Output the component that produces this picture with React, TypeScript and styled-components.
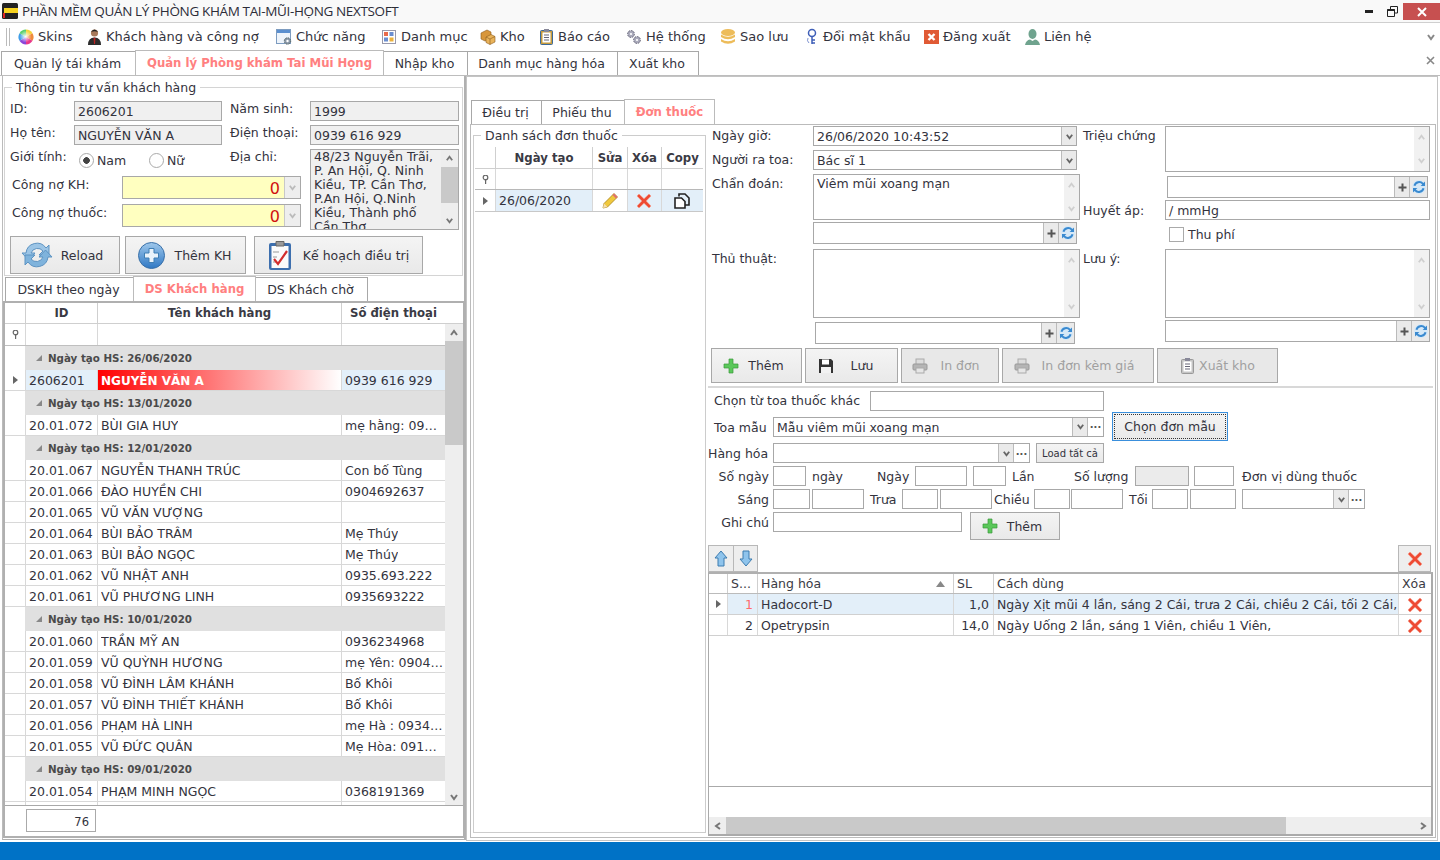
import React from "react";
import styled, { createGlobalStyle, css } from "styled-components";

const Global = createGlobalStyle`
  html, body { margin: 0; padding: 0; background: #fff; overflow: hidden; }
  * { box-sizing: border-box; }
  #root { width: 1440px; height: 860px; }
`;
const LINE = "#a8a8a8";
const FONT = `"DejaVu Sans", Verdana, sans-serif`;

const Root = styled.div`
  width: 1440px; height: 860px; display: flex; flex-direction: column;
  font: 12.5px ${FONT}; color: #33333d; background: #fff; white-space: nowrap;
`;
const TitleBar = styled.div`
  height: 23px; display: flex; align-items: center; background: #f9f9f9;
  border-bottom: 1px solid #cfcfcf; padding-left: 2px; flex: none;
`;
const TitleText = styled.div`
  margin-left: 4px; font: 13.5px "Open Sans", sans-serif; letter-spacing: -0.36px; color: #2c2c38;
`;
const WinControls = styled.div`margin-left: auto; display: flex; align-items: flex-start; height: 22px;`;
const WinBtn = styled.div<{ $w: number; $close?: boolean }>`
  width: ${(p) => p.$w}px; height: 17px; margin-top: 3px; display: flex; align-items: center; justify-content: center;
  background: ${(p) => (p.$close ? "#c75050" : "transparent")};
`;
const MenuBar = styled.div`height: 27px; display: flex; align-items: center; background: #fff; font-size: 13px; flex: none;`;
const Grip = styled.div`width: 4px; height: 18px; margin-left: 6px; margin-right: 8px; border-left: 1px solid #bbb; border-right: 1px solid #bbb;`;
const MenuItem = styled.div<{ $w: number }>`width: ${(p) => p.$w}px; display: flex; align-items: center; gap: 4px; flex: none;`;
const MenuEnd = styled.div`margin-left: auto; padding-right: 4px; display: flex;`;

const TabStrip = styled.div<{ $h: number; $pl?: number }>`
  height: ${(p) => p.$h}px; display: flex; align-items: flex-end; padding-left: ${(p) => p.$pl ?? 0}px;
  position: relative; flex: none;
`;
const Tab = styled.div<{ $w: number; $active?: boolean }>`
  width: ${(p) => p.$w}px; flex: none; display: flex; align-items: center; justify-content: center;
  border: 1px solid ${LINE}; border-bottom: none; background: #fff; margin-right: -1px; padding-right: 2px;
  height: ${(p) => (p.$active ? "100%" : "calc(100% - 1px)")};
  ${(p) => p.$active && css`color: #ff8080; font-weight: 700; font-size: 11.7px; border-color: #bbb; padding-right: 0; position: relative; z-index: 1;`}
`;
const CloseTab = styled.div`position: absolute; right: 5px; top: 6px; display: flex;`;

const Workspace = styled.div`height: 767px; display: flex; flex: none; border-top: 1px solid #bdbdbd;`;
const LeftPanel = styled.div`
  width: 464px; margin-left: 2px; height: 764px; border-right: 2px solid #b0b0b0; border-bottom: 1px solid #b0b0b0;
  border-left: 1px solid #bbb; display: flex; flex-direction: column; flex: none;
`;
const Group = styled.fieldset`
  margin: 4px 0 0 1px; padding: 0 0 0 5px; height: 196px; width: 459px; flex: none;
  border: 1px solid #d4d4d4;
`;
const Legend = styled.legend`padding: 0 4px; margin-left: 2px; line-height: 15px;`;
const InfoRow = styled.div<{ $mt: number }>`
  display: grid; grid-template-columns: 64px 148px 8px 80px 149px; margin-top: ${(p) => p.$mt}px; height: 20px;
`;
const Lbl = styled.div<{ $pl?: number; $pt?: number; $right?: boolean; $w?: number; $ml?: number }>`
  padding-left: ${(p) => p.$pl ?? 0}px; padding-top: ${(p) => p.$pt ?? 0}px; line-height: 16px; flex: none;
  ${(p) => p.$w !== undefined && css`width: ${p.$w}px;`}
  ${(p) => p.$ml !== undefined && css`margin-left: ${p.$ml}px;`}
  ${(p) => p.$right && css`text-align: right; padding-right: 4px;`}
`;
const Box = styled.div<{ $w?: number; $h?: number; $ml?: number; $ro?: boolean; $dim?: boolean }>`
  border: 1px solid ${LINE}; background: ${(p) => (p.$ro ? "#f0f0f0" : p.$dim ? "#ebebeb" : "#fff")};
  padding-left: 3px; line-height: 20px; display: flex; align-items: stretch; flex: none; overflow: hidden;
  ${(p) => p.$w !== undefined && css`width: ${p.$w}px;`}
  height: ${(p) => p.$h ?? 20}px;
  ${(p) => p.$ml !== undefined && css`margin-left: ${p.$ml}px;`}
`;
const BoxText = styled.div`flex: 1; overflow: hidden;`;
const AreaText = styled(BoxText)`line-height: 17px;`;
const AddrRow = styled.div`display: flex; margin-top: 4px; height: 81px;`;
const AddrLeft = styled.div`width: 300px; flex: none; display: flex; flex-direction: column;`;
const GenderRow = styled.div`height: 27px; display: flex; align-items: flex-start;`;
const Radio = styled.div<{ $w: number; $on?: boolean }>`
  width: ${(p) => p.$w}px; display: flex; align-items: center; gap: 3px; padding-top: 4px; flex: none; line-height: 15px;
  &::before {
    content: ""; width: 13px; height: 13px; border-radius: 50%; border: 1px solid #aaa; background: #fff;
    ${(p) => p.$on && css`background: radial-gradient(circle, #444 0 3px, #fff 3.6px);`}
  }
`;
const DebtRow = styled.div<{ $mt?: number }>`display: flex; margin-top: ${(p) => p.$mt ?? 0}px; height: 23px; padding-left: 2px;`;
const DebtInput = styled.div`
  width: 179px; flex: none; border: 1px solid ${LINE}; display: flex; background: #ffffc0; color: #d01010; font-size: 16px; line-height: 24px;
`;
const DebtVal = styled.div`flex: 1; text-align: right; padding-right: 4px;`;
const SpinCell = styled.div`
  width: 16px; flex: none; background: #eee; display: flex; align-items: center; justify-content: center;
  border-left: 1px solid #c8c8c8;
`;
const Address = styled.div`
  width: 149px; height: 81px; border: 1px solid ${LINE}; background: #f0f0f0; display: flex; overflow: hidden; flex: none;
`;
const AddressText = styled.div`flex: 1; padding-left: 3px; line-height: 14px; white-space: pre; overflow: hidden; font-size: 12.6px;`;
const VScroll = styled.div<{ $w: number }>`width: ${(p) => p.$w}px; flex: none; background: #eee; display: flex; flex-direction: column; align-items: stretch;`;
const ScrollBtn = styled.div<{ $h: number }>`height: ${(p) => p.$h}px; flex: none; display: flex; align-items: center; justify-content: center;`;
const Thumb = styled.div<{ $h?: number }>`background: #c9c9c9; ${(p) => p.$h && css`height: ${p.$h}px;`} flex: none;`;
const Fill = styled.div`flex: 1;`;
const ActionRow = styled.div<{ $mt: number; $gap?: number; $pl?: number }>`
  display: flex; gap: ${(p) => p.$gap ?? 5}px; margin-top: ${(p) => p.$mt}px; padding-left: ${(p) => p.$pl ?? 0}px; flex: none;
`;
const Btn = styled.div<{ $w: number; $h: number; $off?: boolean; $gap?: number; $ml?: number; $focus?: boolean; $pr?: number }>`
  width: ${(p) => p.$w}px; height: ${(p) => p.$h}px; flex: none; display: flex; align-items: center; justify-content: center;
  gap: ${(p) => p.$gap ?? 10}px; border: 1px solid ${LINE}; background: linear-gradient(#f4f4f4, #e9e9e9);
  padding-right: ${(p) => p.$pr ?? 0}px;
  color: ${(p) => (p.$off ? "#a0a0a0" : "inherit")};
  ${(p) => p.$off && css`background: #e8e8e8;`}
  ${(p) => p.$ml !== undefined && css`margin-left: ${p.$ml}px;`}
  ${(p) => p.$focus && css`border: 1px solid #3a8fdc; outline: 1px dotted #333; outline-offset: -3px;`}
`;
const SmallBtnText = styled.span`font-size: 10px;`;

const ListFrame = styled.div`
  flex: 1; border: 2px solid #b0b0b0; border-right-width: 1px; margin-bottom: 1px; display: flex; flex-direction: column; width: 461px; min-height: 0;
`;
const GridRow = styled.div<{ $cols: string; $h: number; $bg?: string; $line?: string }>`
  display: grid; grid-template-columns: ${(p) => p.$cols}; height: ${(p) => p.$h}px; flex: none;
  ${(p) => p.$bg && css`background: ${p.$bg};`}
  ${(p) => p.$line && css`border-bottom: 1px solid ${p.$line};`}
`;
const HeadCell = styled.div<{ $left?: boolean }>`
  font-weight: 700; font-size: 11.7px; display: flex; align-items: center; color: #3a3a44; overflow: hidden;
  justify-content: ${(p) => (p.$left ? "flex-start" : "center")};
  border-left: 1px solid #cfcfcf; ${(p) => p.$left && css`padding-left: 3px; font-weight: 400; font-size: 12.5px;`}
`;
const IndCell = styled.div`display: flex; align-items: center; justify-content: center;`;
const Cell = styled.div<{ $sel?: boolean; $right?: boolean; $hot?: boolean; $center?: boolean; $pr?: number }>`
  display: flex; align-items: center; padding: 1px ${(p) => p.$pr ?? 4}px 0 3px; overflow: hidden; border-left: 1px solid #d8d8d8; line-height: 20px;
  ${(p) => p.$sel && css`background: #e3eff9;`}
  ${(p) => p.$right && css`justify-content: flex-end;`}
  ${(p) => p.$center && css`justify-content: center;`}
  ${(p) => p.$hot && css`background: linear-gradient(90deg, #ff0000, #ffffff); color: #fff; font-weight: 700; font-size: 12px;`}
`;
const Clip = styled.span`overflow: hidden; text-overflow: ellipsis;`;
const RedNumber = styled.span`color: #ff6b6b;`;
const ListBody = styled.div`flex: 1; display: flex; min-height: 0; border-bottom: 1px solid #a8a8a8; overflow: hidden;`;
const ListMain = styled.div`width: 440px; flex: none; overflow: hidden;`;
const GroupRow = styled.div`
  height: 24px; margin-left: 20px; background: #e0e0e0; display: flex; align-items: center; gap: 5px; padding-left: 10px;
  font-weight: 700; font-size: 10.3px; color: #4a4a4a;
`;
const ListFooter = styled.div`height: 30px; flex: none; padding: 3px 0 0 21px; background: #fff;`;
const CountBox = styled.div`width: 70px; height: 23px; border: 1px solid #aaa; text-align: right; padding-right: 6px; font-size: 11.5px; line-height: 24px;`;

const RightPanel = styled.div`
  width: 972px; height: 765px; border: 1px solid #c4c4c4; padding: 22px 1px 2px 3px; display: flex; flex-direction: column; flex: none;
`;
const TabPanel = styled.div`flex: 1; border: 1px solid #bbb; display: flex; padding: 0 2px 1px 2px; min-height: 0; width: 966px;`;
const DrugGroup = styled.fieldset`
  margin: 3px 0 3px 0; padding: 0 0 0 1px; width: 233px; flex: none; border: 1px solid #ccc; min-height: 0;
`;
const DrugLegend = styled.legend`padding: 0 4px; margin-left: 6px; line-height: 15px;`;
const DrugList = styled.div`width: 228px; margin-top: 4px;`;
const Detail = styled.div`margin-left: 2px; width: 725px; display: flex; flex-direction: column; flex: none;`;
const TopForm = styled.div`display: flex; height: 263px; border-bottom: 2px solid #d8d8d8; flex: none; flex-wrap: wrap; align-content: flex-start; padding-top: 1px;`;
const FormCol = styled.div<{ $w: number }>`width: ${(p) => p.$w}px; flex: none; display: flex; flex-direction: column;`;
const FormRow = styled.div<{ $mt?: number; $lw: number; $pl?: number }>`
  display: grid; grid-template-columns: ${(p) => p.$lw}px 1fr; margin-top: ${(p) => p.$mt ?? 0}px; padding-left: ${(p) => p.$pl ?? 0}px; flex: none;
`;
const ComboBtn = styled.div<{ $w?: number }>`
  width: ${(p) => p.$w ?? 15}px; flex: none; background: #eaeaea; border-left: 1px solid #bbb; display: flex; align-items: center; justify-content: center;
`;
const Ellipsis = styled(ComboBtn)`background: #fff; font-size: 10px; line-height: 1; font-weight: 700; padding-bottom: 3px; color: #555;`;
const PaleScroll = styled.div`width: 15px; flex: none; background: #f1f1f1; display: flex; flex-direction: column; justify-content: space-between; align-items: center; padding: 6px 0;`;
const CheckRow = styled.div`margin: 8px 0 0 89px; display: flex; align-items: center; gap: 4px; height: 13px; line-height: 15px;
  &::before { content: ""; width: 13px; height: 13px; border: 1px solid #aaa; background: #fff; }`;
const FlexRow = styled.div<{ $mt: number; $h?: number; $center?: boolean }>`
  display: flex; margin-top: ${(p) => p.$mt}px; flex: none; height: ${(p) => (p.$h ? `${p.$h}px` : "auto")};
  align-items: ${(p) => (p.$center ? "center" : "flex-start")};
`;
const TextLine = styled(Lbl)`line-height: 22px;`;
const Toolbar = styled.div`height: 27px; margin-top: 5px; flex: none; display: flex; width: 723px;`;
const ToolBtn = styled.div<{ $w: number; $push?: boolean }>`
  width: ${(p) => p.$w}px; flex: none; background: #eee; border: 1px solid #b8b8b8; margin-right: -1px; display: flex; align-items: center; justify-content: center;
  ${(p) => p.$push && css`margin-left: auto; margin-right: 0;`}
`;
const DrugTable = styled.div`flex: 1; width: 725px; border-top: 2px solid #b0b0b0; border-right: 2px solid #aaa; border-left: 1px solid #aaa; border-bottom: 2px solid #aaa; display: flex; flex-direction: column; min-height: 0;`;
const TableBody = styled.div`flex: 1;`;
const TableFoot = styled.div`height: 31px; flex: none; border-top: 1px solid #aaa;`;
const HScroll = styled.div`height: 17px; flex: none; background: #eee; display: flex;`;
const HArrow = styled.div`width: 17px; flex: none; display: flex; align-items: center; justify-content: center;`;
const HThumb = styled.div`width: 560px; background: #c9c9c9; flex: none;`;
const StatusBar = styled.div`height: 18px; background: #0072c6; flex: none;`;
const Svg = styled.svg`flex: none; display: block;`;

const Chevron = ({ dir = "down", c = "#777", s = 10 }: { dir?: string; c?: string; s?: number }) => {
  const d: Record<string, string> = { down: "2,3 5,7 8,3", up: "2,7 5,3 8,7", left: "7,2 3,5 7,8", right: "3,2 7,5 3,8" };
  return <Svg width={s} height={s} viewBox="0 0 10 10"><polyline points={d[dir]} fill="none" stroke={c} strokeWidth="2" /></Svg>;
};
const Logo = () => (
  <Svg width="16" height="18" viewBox="0 0 16 18">
    <rect x="0" y="1" width="16" height="16" rx="1.5" fill="#222" />
    <rect x="2" y="6" width="14" height="5" fill="#f6d21f" />
    <rect x="1" y="11" width="2" height="5" fill="#d22" />
  </Svg>
);
const SkinsIcon = () => (
  <Svg width="16" height="18" viewBox="0 0 16 18">
    <defs><radialGradient id="wh"><stop offset="0" stopColor="#fff" stopOpacity=".95" /><stop offset="1" stopColor="#fff" stopOpacity="0" /></radialGradient></defs>
    <path d="M8 9 L8 1.5 A7.5 7.5 0 0 1 14.5 5.2Z" fill="#f3d43b" />
    <path d="M8 9 L14.5 5.2 A7.5 7.5 0 0 1 14.5 12.8Z" fill="#f08a3c" />
    <path d="M8 9 L14.5 12.8 A7.5 7.5 0 0 1 8 16.5Z" fill="#e8388a" />
    <path d="M8 9 L8 16.5 A7.5 7.5 0 0 1 1.5 12.8Z" fill="#8a45d8" />
    <path d="M8 9 L1.5 12.8 A7.5 7.5 0 0 1 1.5 5.2Z" fill="#3f9de8" />
    <path d="M8 9 L1.5 5.2 A7.5 7.5 0 0 1 8 1.5Z" fill="#57cf6b" />
    <circle cx="7.5" cy="8.5" r="6" fill="url(#wh)" />
  </Svg>
);
const PersonIcon = () => (
  <Svg width="15" height="18" viewBox="0 0 15 18">
    <circle cx="7.5" cy="5" r="3.6" fill="#a8795a" />
    <path d="M4 4 Q7.5 -1 11 4 Q7.5 2.5 4 4Z" fill="#222" />
    <path d="M1 17 Q1 9.5 7.5 9.5 Q14 9.5 14 17Z" fill="#2c2c2c" />
    <path d="M6.5 9.8 L8.5 9.8 L8 16 L7 16Z" fill="#b22" />
  </Svg>
);
const WindowGear = () => (
  <Svg width="16" height="18" viewBox="0 0 16 18">
    <rect x=".5" y="1.5" width="14" height="14" fill="#eef4fb" stroke="#7d9cc0" />
    <rect x="1" y="2" width="13" height="3" fill="#5b8fcf" />
    <circle cx="11.5" cy="13" r="3.2" fill="#8a98a8" stroke="#566" strokeDasharray="1.5 1" />
    <circle cx="11.5" cy="13" r="1.2" fill="#fff" />
  </Svg>
);
const CatIcon = () => (
  <Svg width="16" height="18" viewBox="0 0 16 18">
    <rect x="1.5" y="2.5" width="13" height="13" fill="#fff" stroke="#99a" />
    <rect x="3" y="4" width="4" height="4" fill="#e96a4a" /><rect x="8.5" y="4" width="4" height="4" fill="#6a8ed0" />
    <rect x="3" y="9.5" width="4" height="4" fill="#6a8ed0" /><rect x="8.5" y="9.5" width="4" height="4" fill="#ecb13c" />
  </Svg>
);
const BoxIcon = () => (
  <Svg width="16" height="18" viewBox="0 0 16 18">
    <path d="M1 5 L7 2 L11 4 L11 10 L5 13 L1 11Z" fill="#d8963a" stroke="#8c5a1c" strokeWidth=".6" />
    <path d="M6 9 L11 6.5 L15 8.5 L15 14 L10 16.5 L6 14.5Z" fill="#e9b35a" stroke="#8c5a1c" strokeWidth=".6" />
    <path d="M6 9 L10 11 L15 8.5 M10 11 L10 16.5" stroke="#8c5a1c" strokeWidth=".6" fill="none" />
  </Svg>
);
const ClipIcon = ({ c = "#c59a3c", b = "#3c6a9a" }: { c?: string; b?: string }) => (
  <Svg width="15" height="18" viewBox="0 0 15 18">
    <rect x="1.5" y="2.5" width="12" height="14" rx="1" fill={c} stroke={b} />
    <rect x="3.5" y="4.5" width="8" height="10" fill="#fff" />
    <rect x="5" y="1" width="5" height="3" fill="#889" />
    <path d="M5 7h5M5 9.5h5M5 12h5" stroke="#667" />
  </Svg>
);
const GearsIcon = () => (
  <Svg width="16" height="18" viewBox="0 0 16 18">
    <circle cx="5" cy="6" r="3.4" fill="#aab" stroke="#667" strokeDasharray="1.6 1" />
    <circle cx="5" cy="6" r="1.1" fill="#fff" />
    <circle cx="11" cy="12" r="3.4" fill="#aab" stroke="#667" strokeDasharray="1.6 1" />
    <circle cx="11" cy="12" r="1.1" fill="#fff" />
  </Svg>
);
const DbIcon = () => (
  <Svg width="16" height="18" viewBox="0 0 16 18">
    <ellipse cx="8" cy="4.5" rx="7" ry="3.5" fill="#edbc5a" />
    <path d="M1 6.5 Q8 11 15 6.5 V9 Q8 13.5 1 9Z" fill="#edbc5a" />
    <path d="M1 11 Q8 15.5 15 11 V13.5 Q8 18 1 13.5Z" fill="#edbc5a" />
  </Svg>
);
const KeyIcon = () => (
  <Svg width="14" height="18" viewBox="0 0 14 18">
    <circle cx="7" cy="5" r="3.5" fill="none" stroke="#3f5fb8" strokeWidth="1.5" />
    <path d="M7 8.5 V16 M7 12 H10 M7 15 H10" stroke="#3f5fb8" strokeWidth="1.5" />
    <path d="M3 10 Q1.5 13 4 15" fill="none" stroke="#7d92d0" />
  </Svg>
);
const ExitIcon = () => (
  <Svg width="15" height="18" viewBox="0 0 15 18">
    <rect x="0" y="2" width="15" height="14" fill="#e05a35" />
    <path d="M4.5 6 L10.5 12 M10.5 6 L4.5 12" stroke="#fff" strokeWidth="2.4" />
  </Svg>
);
const ContactIcon = () => (
  <Svg width="15" height="18" viewBox="0 0 15 18">
    <ellipse cx="7.5" cy="6" rx="4" ry="5" fill="#6fa38e" />
    <path d="M0 17 Q1 12 5 11.5 L7.5 13 L10 11.5 Q14 12 15 17Z" fill="#6fa38e" />
  </Svg>
);
const XIcon = ({ s = 16 }: { s?: number }) => (
  <Svg width={s} height={s} viewBox="0 0 16 16">
    <path d="M3 1 L8 5.8 L13 1 L15 3 L10.2 8 L15 13 L13 15 L8 10.2 L3 15 L1 13 L5.8 8 L1 3Z" fill="#ee4a33" stroke="#f49a8a" strokeWidth=".8" />
  </Svg>
);
const PlusSmall = () => <Svg width="9" height="9" viewBox="0 0 9 9"><path d="M4.5 0.5V8.5M0.5 4.5H8.5" stroke="#555" strokeWidth="2" /></Svg>;
const RefreshMini = () => (
  <Svg width="16" height="16" viewBox="0 0 16 16">
    <circle cx="8" cy="8" r="7" fill="#d5e8f7" />
    <path d="M2.5 6.5 A5.8 5.8 0 0 1 12.5 4 L14 2.5 V7 H9.6 L11.2 5.4 A4 4 0 0 0 4.4 7Z" fill="#3a8ad0" />
    <path d="M13.5 9.5 A5.8 5.8 0 0 1 3.5 12 L2 13.5 V9 H6.4 L4.8 10.6 A4 4 0 0 0 11.6 9Z" fill="#3a8ad0" />
  </Svg>
);
const ReloadBig = () => (
  <Svg width="32" height="28" viewBox="0 0 32 28">
    <path d="M5 12 A11 11 0 0 1 25 7 L28 4 L28 14 L18 14 L22 10 A7 7 0 0 0 10 12 L14 12 L7.5 19 L1 12Z" fill="#9cc5e6" stroke="#5d93c2" />
    <path d="M27 16 A11 11 0 0 1 7 21 L4 24 L4 14 L14 14 L10 18 A7 7 0 0 0 22 16 L18 16 L24.5 9 L31 16Z" fill="#7fb3dc" stroke="#5d93c2" />
  </Svg>
);
const PlusCircle = () => (
  <Svg width="27" height="27" viewBox="0 0 27 27">
    <defs><linearGradient id="pc" x1="0" y1="0" x2="0" y2="1"><stop offset="0" stopColor="#9fc8ec" /><stop offset="1" stopColor="#2f78c4" /></linearGradient></defs>
    <circle cx="13.5" cy="13.5" r="13" fill="url(#pc)" stroke="#3a70a8" />
    <path d="M11 6.5H16V11H20.5V16H16V20.5H11V16H6.5V11H11Z" fill="#eaf3fb" stroke="#3f7fb5" />
  </Svg>
);
const PlanIcon = () => (
  <Svg width="24" height="32" viewBox="0 0 24 32">
    <rect x="1" y="4" width="22" height="27" rx="2" fill="#3d6fae" />
    <rect x="3.5" y="7" width="17" height="22" fill="#fbfbfb" />
    <path d="M8 2.5 H16 V7 H8Z" fill="#9a9a9a" stroke="#666" />
    <path d="M5 13h6M5 18h4M5 23h4" stroke="#bbb" strokeWidth="1.5" />
    <path d="M6 20 L10 25 L19 12" fill="none" stroke="#d22d2d" strokeWidth="2.2" />
  </Svg>
);
const Pencil = () => (
  <Svg width="18" height="18" viewBox="0 0 18 18">
    <path d="M2 16 L3 11.5 L13 1.5 L16.5 5 L6.5 15Z" fill="#f0c83c" stroke="#a88218" strokeWidth=".8" />
    <path d="M2 16 L3 11.5 L6.5 15Z" fill="#f5dfb0" />
    <path d="M13 1.5 L16.5 5 L15 6.5 L11.5 3Z" fill="#e07070" />
  </Svg>
);
const CopyIcon = () => (
  <Svg width="16" height="16" viewBox="0 0 16 16">
    <path d="M5 3.5V1H11L15 5V12H11" fill="none" stroke="#222" strokeWidth="1.6" />
    <path d="M1 5H7.5L11 8.5V15H1Z" fill="#fff" stroke="#222" strokeWidth="1.6" />
  </Svg>
);
const GreenPlus = () => (
  <Svg width="16" height="16" viewBox="0 0 16 16">
    <path d="M6 1H10V6H15V10H10V15H6V10H1V6H6Z" fill="#5bc85b" stroke="#3a9a3a" strokeWidth=".7" />
  </Svg>
);
const Floppy = () => (
  <Svg width="16" height="16" viewBox="0 0 16 16">
    <path d="M1 1H13L15 3V15H1Z" fill="#333" /><rect x="4" y="1.5" width="7" height="5" fill="#fff" />
    <rect x="3" y="9" width="10" height="6" fill="#f2f2f2" />
  </Svg>
);
const Printer = () => (
  <Svg width="16" height="16" viewBox="0 0 16 16">
    <rect x="4" y="1" width="8" height="6" fill="#ddd" stroke="#aaa" />
    <rect x="1" y="6" width="14" height="6" rx="1" fill="#b5b5b5" stroke="#999" />
    <rect x="4" y="10" width="8" height="5" fill="#e6e6e6" stroke="#aaa" />
  </Svg>
);
const Pin = () => (
  <Svg width="7" height="9" viewBox="0 0 7 9">
    <circle cx="3.5" cy="2.5" r="2.3" fill="#fff" stroke="#666" strokeWidth="1.2" /><rect x="3" y="4" width="1.2" height="5" fill="#666" />
  </Svg>
);
const RowArrow = () => <Svg width="5" height="8" viewBox="0 0 5 8"><path d="M0 0 L5 4 L0 8Z" fill="#666" /></Svg>;
const GroupMark = () => <Svg width="8" height="8" viewBox="0 0 8 8"><path d="M7 1 V7 H1Z" fill="#888" /></Svg>;
const SortUp = () => <Svg width="9" height="6" viewBox="0 0 9 6"><path d="M4.5 0 L9 6 H0Z" fill="#888" /></Svg>;
const MoveArrow = ({ up }: { up?: boolean }) => (
  <Svg width="14" height="17" viewBox="0 0 14 17">
    <path d={up ? "M7 1 L13 8 H10 V16 H4 V8 H1Z" : "M7 16 L13 9 H10 V1 H4 V9 H1Z"} fill="#8fc4ec" stroke="#3d7cb0" />
  </Svg>
);

const LEFT_COLS = "20px 72px 244px 104px";
type Item = { g: string } | { id: string; name: string; phone: string; sel?: boolean };
const people: Item[] = [
  { g: "Ngày tạo HS: 26/06/2020" },
  { id: "2606201", name: "NGUYỄN VĂN A", phone: "0939 616 929", sel: true },
  { g: "Ngày tạo HS: 13/01/2020" },
  { id: "20.01.072", name: "BÙI GIA HUY", phone: "mẹ hằng: 0915468912" },
  { g: "Ngày tạo HS: 12/01/2020" },
  { id: "20.01.067", name: "NGUYỄN THANH TRÚC", phone: "Con bố Tùng" },
  { id: "20.01.066", name: "ĐÀO HUYỀN CHI", phone: "0904692637" },
  { id: "20.01.065", name: "VŨ VĂN VƯỢNG", phone: "" },
  { id: "20.01.064", name: "BÙI BẢO TRÂM", phone: "Mẹ Thúy" },
  { id: "20.01.063", name: "BÙI BẢO NGỌC", phone: "Mẹ Thúy" },
  { id: "20.01.062", name: "VŨ NHẬT ANH", phone: "0935.693.222" },
  { id: "20.01.061", name: "VŨ PHƯƠNG LINH", phone: "0935693222" },
  { g: "Ngày tạo HS: 10/01/2020" },
  { id: "20.01.060", name: "TRẦN MỸ AN", phone: "0936234968" },
  { id: "20.01.059", name: "VŨ QUỲNH HƯƠNG", phone: "mẹ Yên: 0904123456" },
  { id: "20.01.058", name: "VŨ ĐÌNH LÂM KHÁNH", phone: "Bố Khôi" },
  { id: "20.01.057", name: "VŨ ĐÌNH THIẾT KHÁNH", phone: "Bố Khôi" },
  { id: "20.01.056", name: "PHẠM HÀ LINH", phone: "mẹ Hà : 0934567812" },
  { id: "20.01.055", name: "VŨ ĐỨC QUÂN", phone: "Mẹ Hòa: 0912345678" },
  { g: "Ngày tạo HS: 09/01/2020" },
  { id: "20.01.054", name: "PHẠM MINH NGỌC", phone: "0368191369" },
  { id: "", name: "", phone: "" },
];
const menu = [
  { w: 69, icon: <SkinsIcon />, t: "Skins" },
  { w: 189, icon: <PersonIcon />, t: "Khách hàng và công nợ" },
  { w: 105, icon: <WindowGear />, t: "Chức năng" },
  { w: 99, icon: <CatIcon />, t: "Danh mục" },
  { w: 59, icon: <BoxIcon />, t: "Kho" },
  { w: 87, icon: <ClipIcon />, t: "Báo cáo" },
  { w: 94, icon: <GearsIcon />, t: "Hệ thống" },
  { w: 85, icon: <DbIcon />, t: "Sao lưu" },
  { w: 119, icon: <KeyIcon />, t: "Đổi mật khẩu" },
  { w: 101, icon: <ExitIcon />, t: "Đăng xuất" },
  { w: 80, icon: <ContactIcon />, t: "Liên hệ" },
];
const Combo = ({ w, text, dots, ml }: { w: number; text?: string; dots?: boolean; ml?: number }) => (
  <Box $w={w} $ml={ml}>
    <BoxText>{text}</BoxText>
    <ComboBtn><Chevron c="#666" s={9} /></ComboBtn>
    {dots && <Ellipsis $w={16}>...</Ellipsis>}
  </Box>
);
const AddField = ({ w, ml }: { w?: number; ml?: number }) => (
  <Box $w={w} $h={22} $ml={ml}>
    <BoxText />
    <ComboBtn><PlusSmall /></ComboBtn>
    <ComboBtn $w={18}><RefreshMini /></ComboBtn>
  </Box>
);
const Area = ({ h, text }: { h: number; text?: string }) => (
  <Box $h={h}>
    <AreaText>{text}</AreaText>
    <PaleScroll><Chevron dir="up" c="#cfcfcf" s={9} /><Chevron c="#cfcfcf" s={9} /></PaleScroll>
  </Box>
);
const drugCols = "18px 30px 196px 40px 405px 34px";
const listCols = "20px 97px 35px 34px 42px";

export default function App() {
  return (
    <Root>
      <Global />
      <TitleBar>
        <Logo />
        <TitleText>PHẦN MỀM QUẢN LÝ PHÒNG KHÁM TAI-MŨI-HỌNG NEXTSOFT</TitleText>
        <WinControls>
          <WinBtn $w={24}><Svg width="8" height="3" viewBox="0 0 8 3"><rect width="8" height="3" fill="#222" /></Svg></WinBtn>
          <WinBtn $w={22}><Svg width="11" height="11" viewBox="0 0 11 11"><path d="M3.5 3V.5H10.5V7H8M.5 3.5H7.5V10.5H.5Z" fill="none" stroke="#222" /><rect x=".5" y="3" width="7" height="2" fill="#222" /></Svg></WinBtn>
          <WinBtn $w={37} $close><Svg width="10" height="10" viewBox="0 0 10 10"><path d="M1 1 L9 9 M9 1 L1 9" stroke="#fff" strokeWidth="2" /></Svg></WinBtn>
        </WinControls>
      </TitleBar>
      <MenuBar>
        <Grip />
        {menu.map((m) => <MenuItem key={m.t} $w={m.w}>{m.icon}<span>{m.t}</span></MenuItem>)}
        <MenuEnd><Chevron c="#888" s={10} /></MenuEnd>
      </MenuBar>
      <TabStrip $h={25} $pl={1}>
        <Tab $w={135}>Quản lý tái khám</Tab>
        <Tab $w={249} $active>Quản lý Phòng khám Tai Mũi Họng</Tab>
        <Tab $w={85}>Nhập kho</Tab>
        <Tab $w={151}>Danh mục hàng hóa</Tab>
        <Tab $w={82}>Xuất kho</Tab>
        <CloseTab><Svg width="9" height="9" viewBox="0 0 9 9"><path d="M1 1 L8 8 M8 1 L1 8" stroke="#888" strokeWidth="1.6" /></Svg></CloseTab>
      </TabStrip>
      <Workspace>
        <LeftPanel>
          <Group>
            <Legend>Thông tin tư vấn khách hàng</Legend>
            <InfoRow $mt={6}>
              <Lbl>ID:</Lbl><Box $ro>2606201</Box><span /><Lbl>Năm sinh:</Lbl><Box $ro>1999</Box>
            </InfoRow>
            <InfoRow $mt={4}>
              <Lbl>Họ tên:</Lbl><Box $ro>NGUYỄN VĂN A</Box><span /><Lbl>Điện thoại:</Lbl><Box $ro>0939 616 929</Box>
            </InfoRow>
            <AddrRow>
              <AddrLeft>
                <GenderRow>
                  <Lbl $w={69}>Giới tính:</Lbl>
                  <Radio $w={70} $on>Nam</Radio>
                  <Radio $w={81}>Nữ</Radio>
                  <Lbl>Địa chỉ:</Lbl>
                </GenderRow>
                <DebtRow>
                  <Lbl $w={110} $pt={1}>Công nợ KH:</Lbl>
                  <DebtInput><DebtVal>0</DebtVal><SpinCell><Chevron c="#bbb" s={9} /></SpinCell></DebtInput>
                </DebtRow>
                <DebtRow $mt={5}>
                  <Lbl $w={110} $pt={1}>Công nợ thuốc:</Lbl>
                  <DebtInput><DebtVal>0</DebtVal><SpinCell><Chevron c="#bbb" s={9} /></SpinCell></DebtInput>
                </DebtRow>
              </AddrLeft>
              <Address>
                <AddressText>{"48/23 Nguyễn Trãi,\nP. An Hội, Q. Ninh\nKiều, TP. Cần Thơ,\nP.An Hội, Q.Ninh\nKiều, Thành phố\nCần Thơ"}</AddressText>
                <VScroll $w={17}>
                  <ScrollBtn $h={17}><Chevron dir="up" s={9} /></ScrollBtn>
                  <Thumb $h={36} /><Fill />
                  <ScrollBtn $h={17}><Chevron s={9} /></ScrollBtn>
                </VScroll>
              </Address>
            </AddrRow>
            <ActionRow $mt={6}>
              <Btn $w={110} $h={38} $gap={8} $pr={6}><ReloadBig /><span>Reload</span></Btn>
              <Btn $w={121} $h={38} $gap={10} $pr={2}><PlusCircle /><span>Thêm KH</span></Btn>
              <Btn $w={169} $h={38} $gap={11} $ml={3}><PlanIcon /><span>Kế hoạch điều trị</span></Btn>
            </ActionRow>
          </Group>
          <TabStrip $h={25} $pl={2}>
            <Tab $w={129}>DSKH theo ngày</Tab>
            <Tab $w={123} $active>DS Khách hàng</Tab>
            <Tab $w={113}>DS Khách chờ</Tab>
          </TabStrip>
          <ListFrame>
            <GridRow $cols={LEFT_COLS} $h={21} $line="#cfcfcf">
              <IndCell /><HeadCell>ID</HeadCell><HeadCell>Tên khách hàng</HeadCell><HeadCell>Số điện thoại</HeadCell>
            </GridRow>
            <ListBody>
              <ListMain>
                <GridRow $cols={LEFT_COLS} $h={22} $line="#bfbfbf">
                  <IndCell><Pin /></IndCell><Cell /><Cell /><Cell />
                </GridRow>
                {people.map((p, i) =>
                  "g" in p ? (
                    <GroupRow key={i}><GroupMark />{p.g}</GroupRow>
                  ) : (
                    <GridRow key={i} $cols={LEFT_COLS} $h={21} $line="#d8d8d8">
                      <IndCell>{p.sel && <RowArrow />}</IndCell>
                      <Cell $sel={p.sel}>{p.id}</Cell>
                      <Cell $hot={p.sel}><Clip>{p.name}</Clip></Cell>
                      <Cell $sel={p.sel} $pr={2}><Clip>{p.phone}</Clip></Cell>
                    </GridRow>
                  )
                )}
              </ListMain>
              <VScroll $w={18}>
                <ScrollBtn $h={17}><Chevron dir="up" /></ScrollBtn>
                <Thumb $h={104} /><Fill />
                <ScrollBtn $h={17}><Chevron /></ScrollBtn>
              </VScroll>
            </ListBody>
            <ListFooter><CountBox>76</CountBox></ListFooter>
          </ListFrame>
        </LeftPanel>
        <RightPanel>
          <TabStrip $h={25} $pl={1}>
            <Tab $w={71}>Điều trị</Tab>
            <Tab $w={84}>Phiếu thu</Tab>
            <Tab $w={91} $active>Đơn thuốc</Tab>
          </TabStrip>
          <TabPanel>
            <DrugGroup>
              <DrugLegend>Danh sách đơn thuốc</DrugLegend>
              <DrugList>
                <GridRow $cols={listCols} $h={22} $line="#cfcfcf">
                  <IndCell /><HeadCell>Ngày tạo</HeadCell><HeadCell>Sửa</HeadCell><HeadCell>Xóa</HeadCell><HeadCell>Copy</HeadCell>
                </GridRow>
                <GridRow $cols={listCols} $h={21} $line="#b8b8b8">
                  <IndCell><Pin /></IndCell><Cell /><Cell /><Cell /><Cell />
                </GridRow>
                <GridRow $cols={listCols} $h={22} $line="#c8c8c8">
                  <IndCell><RowArrow /></IndCell>
                  <Cell $sel>26/06/2020</Cell>
                  <Cell $center><Pencil /></Cell>
                  <Cell $sel $center><XIcon /></Cell>
                  <Cell $sel $center><CopyIcon /></Cell>
                </GridRow>
              </DrugList>
            </DrugGroup>
            <Detail>
              <TopForm>
                <FormCol $w={372}>
                  <FormRow $lw={101} $pl={4}><Lbl $pt={2}>Ngày giờ:</Lbl><Combo w={264} text="26/06/2020 10:43:52" /></FormRow>
                  <FormRow $lw={101} $pl={4} $mt={4}><Lbl $pt={2}>Người ra toa:</Lbl><Combo w={264} text="Bác sĩ 1" /></FormRow>
                  <FormRow $lw={101} $pl={4} $mt={4}><Lbl $pt={2}>Chẩn đoán:</Lbl><Area h={46} text="Viêm mũi xoang mạn" /></FormRow>
                  <FormRow $lw={101} $pl={4} $mt={2}><span /><AddField w={264} /></FormRow>
                  <FormRow $lw={101} $pl={4} $mt={5}><Lbl $pt={2}>Thủ thuật:</Lbl><Area h={69} /></FormRow>
                  <FormRow $lw={103} $pl={4} $mt={4}><span /><AddField w={260} /></FormRow>
                </FormCol>
                <FormCol $w={350}>
                  <FormRow $lw={82} $pl={3}><Lbl $pt={2}>Triệu chứng</Lbl><Area h={46} /></FormRow>
                  <FormRow $lw={84} $pl={3} $mt={4}><span /><AddField w={261} /></FormRow>
                  <FormRow $lw={82} $pl={3} $mt={2}><Lbl $pt={3}>Huyết áp:</Lbl><Box>/ mmHg</Box></FormRow>
                  <CheckRow>Thu phí</CheckRow>
                  <FormRow $lw={82} $pl={3} $mt={8}><Lbl $pt={2}>Lưu ý:</Lbl><Area h={69} /></FormRow>
                  <FormRow $lw={82} $pl={3} $mt={2}><span /><AddField /></FormRow>
                </FormCol>
                <ActionRow $mt={4} $gap={3} $pl={3}>
                  <Btn $w={91} $h={35} $gap={9} $pr={6}><GreenPlus /><span>Thêm</span></Btn>
                  <Btn $w={93} $h={35} $gap={17} $pr={12}><Floppy /><span>Lưu</span></Btn>
                  <Btn $w={98} $h={35} $off $gap={12} $pr={8}><Printer /><span>In đơn</span></Btn>
                  <Btn $w={152} $h={35} $off $gap={12} $pr={8}><Printer /><span>In đơn kèm giá</span></Btn>
                  <Btn $w={121} $h={35} $off $gap={4}><ClipIcon c="#c4c4c4" b="#999" /><span>Xuất kho</span></Btn>
                </ActionRow>
              </TopForm>
              <FlexRow $mt={3} $center>
                <Lbl $w={162} $pl={6}>Chọn từ toa thuốc khác</Lbl>
                <Box $w={234} />
              </FlexRow>
              <FlexRow $mt={1} $h={29} $center>
                <Lbl $w={65} $pl={6} $pt={2}>Toa mẫu</Lbl>
                <Combo w={331} text="Mẫu viêm mũi xoang mạn" dots />
                <Btn $w={116} $h={29} $ml={8} $focus>Chọn đơn mẫu</Btn>
              </FlexRow>
              <FlexRow $mt={2} $h={20}>
                <TextLine $w={65}>Hàng hóa</TextLine>
                <Combo w={257} dots />
                <Btn $w={68} $h={20} $ml={6}><SmallBtnText>Load tất cả</SmallBtnText></Btn>
              </FlexRow>
              <FlexRow $mt={3} $h={20}>
                <TextLine $w={65} $right>Số ngày</TextLine>
                <Box $w={33} />
                <TextLine $w={71} $pl={6}>ngày</TextLine>
                <TextLine $w={38}>Ngày</TextLine>
                <Box $w={52} />
                <Box $w={33} $ml={6} />
                <TextLine $w={68} $pl={6}>Lần</TextLine>
                <TextLine $w={61}>Số lượng</TextLine>
                <Box $w={54} $dim />
                <Box $w={40} $ml={5} />
                <TextLine $pl={8}>Đơn vị dùng thuốc</TextLine>
              </FlexRow>
              <FlexRow $mt={3} $h={20}>
                <TextLine $w={65} $right>Sáng</TextLine>
                <Box $w={37} />
                <Box $w={52} $ml={2} />
                <TextLine $w={38} $pl={6}>Trưa</TextLine>
                <Box $w={36} />
                <Box $w={52} $ml={2} />
                <TextLine $w={42} $pl={2}>Chiều</TextLine>
                <Box $w={36} />
                <Box $w={52} $ml={1} />
                <TextLine $w={29} $pl={6}>Tối</TextLine>
                <Box $w={36} />
                <Box $w={46} $ml={2} />
                <Combo w={123} ml={6} dots />
              </FlexRow>
              <FlexRow $mt={3}>
                <TextLine $w={65} $right>Ghi chú</TextLine>
                <Box $w={189} />
                <Btn $w={90} $h={28} $ml={8} $gap={9} $pr={6}><GreenPlus /><span>Thêm</span></Btn>
              </FlexRow>
              <Toolbar>
                <ToolBtn $w={26}><MoveArrow up /></ToolBtn>
                <ToolBtn $w={25}><MoveArrow /></ToolBtn>
                <ToolBtn $w={33} $push><XIcon /></ToolBtn>
              </Toolbar>
              <DrugTable>
                <GridRow $cols={drugCols} $h={20} $line="#bbb">
                  <IndCell />
                  <HeadCell $left>S...</HeadCell>
                  <HeadCell $left><Fill>Hàng hóa</Fill><SortUp />&nbsp;&nbsp;</HeadCell>
                  <HeadCell $left>SL</HeadCell>
                  <HeadCell $left>Cách dùng</HeadCell>
                  <HeadCell $left>Xóa</HeadCell>
                </GridRow>
                <GridRow $cols={drugCols} $h={21} $line="#d0d0d0">
                  <IndCell><RowArrow /></IndCell>
                  <Cell $sel $right><RedNumber>1</RedNumber></Cell>
                  <Cell $sel>Hadocort-D</Cell>
                  <Cell $right $sel>1,0</Cell>
                  <Cell $sel $pr={0}><Clip>Ngày Xịt mũi 4 lần, sáng 2 Cái, trưa 2 Cái, chiều 2 Cái, tối 2 Cái,</Clip></Cell>
                  <Cell $center><XIcon /></Cell>
                </GridRow>
                <GridRow $cols={drugCols} $h={21} $line="#d0d0d0">
                  <IndCell />
                  <Cell $right>2</Cell>
                  <Cell>Opetrypsin</Cell>
                  <Cell $right>14,0</Cell>
                  <Cell>Ngày Uống 2 lần, sáng 1 Viên, chiều 1 Viên,</Cell>
                  <Cell $center><XIcon /></Cell>
                </GridRow>
                <TableBody />
                <TableFoot />
                <HScroll>
                  <HArrow><Chevron dir="left" /></HArrow>
                  <HThumb />
                  <Fill />
                  <HArrow><Chevron dir="right" /></HArrow>
                </HScroll>
              </DrugTable>
            </Detail>
          </TabPanel>
        </RightPanel>
      </Workspace>
      <StatusBar />
    </Root>
  );
}
